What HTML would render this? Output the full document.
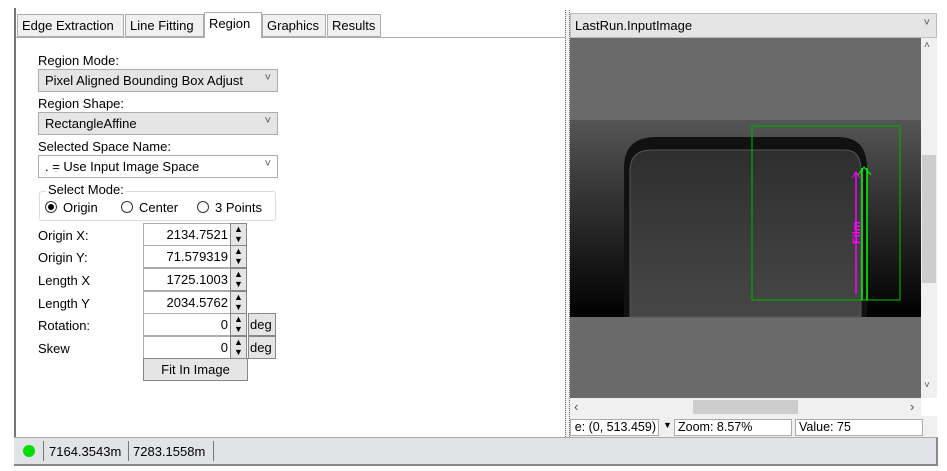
<!DOCTYPE html>
<html><head><style>
*{box-sizing:border-box;margin:0;padding:0}
body{width:947px;height:471px;background:#fff;font-family:"Liberation Sans",sans-serif;font-size:13px;color:#000;position:relative;overflow:hidden}
.a{position:absolute}
.tab{position:absolute;top:14px;height:23px;background:#f0f0f0;border:1px solid #acacac;padding:3px 4px;font-size:13px;white-space:nowrap}
.lbl{position:absolute;left:38px;font-size:13px}
.cb{position:absolute;left:38px;width:240px;height:23px;background:#e5e5e5;border:1px solid #acacac;padding:3px 6px}
.cb:after{content:"˅";position:absolute;right:6px;top:2px;font-size:11px;color:#555}
.num{position:absolute;left:143px;width:88px;height:23px;border:1px solid #acacac;background:#fff;text-align:right;padding:3px 2px}
.sp{position:absolute;left:230px;width:17px;height:23px;border:1px solid #888;background:#e5e5e5;font-size:9px;line-height:10px;text-align:center}
.deg{position:absolute;left:248px;width:28px;height:23px;border:1px solid #888;background:#e5e5e5;padding:3px 1px}
.row{position:absolute;left:38px}
</style></head><body>
<div class="a" style="left:14px;top:8px;width:2px;height:458px;background:#777"></div>
<div class="a" style="left:16px;top:37px;width:549px;height:1px;background:#acacac"></div>
<div class="tab" style="left:17px;width:107px">Edge Extraction</div>
<div class="tab" style="left:125px;width:79px">Line Fitting</div>
<div class="tab" style="left:204px;top:12px;height:26px;width:58px;background:#fff;border-bottom:none">Region</div>
<div class="tab" style="left:262px;width:64px">Graphics</div>
<div class="tab" style="left:327px;width:54px">Results</div>

<div class="lbl" style="top:53px">Region Mode:</div>
<div class="cb" style="top:69px">Pixel Aligned Bounding Box Adjust</div>
<div class="lbl" style="top:96px">Region Shape:</div>
<div class="cb" style="top:112px">RectangleAffine</div>
<div class="lbl" style="top:139px">Selected Space Name:</div>
<div class="cb" style="top:155px;background:#fff">. = Use Input Image Space</div>
<div class="a" style="left:39px;top:191px;width:237px;height:30px;border:1px solid #dcdcdc;border-radius:3px"></div>
<div class="a" style="left:46px;top:182px;background:#fff;padding:0 2px">Select Mode:</div>
<div class="a" style="left:45px;top:201px;width:12px;height:12px;border:1px solid #333;border-radius:50%"><div style="margin:2px;width:6px;height:6px;background:#000;border-radius:50%"></div></div>
<div class="a" style="left:63px;top:200px">Origin</div>
<div class="a" style="left:121px;top:201px;width:12px;height:12px;border:1px solid #333;border-radius:50%"></div>
<div class="a" style="left:139px;top:200px">Center</div>
<div class="a" style="left:197px;top:201px;width:12px;height:12px;border:1px solid #333;border-radius:50%"></div>
<div class="a" style="left:215px;top:200px">3 Points</div>

<div class="row" style="top:228px">Origin X:</div><div class="num" style="top:223px">2134.7521</div><div class="sp" style="top:223px">▲<br>▼</div>
<div class="row" style="top:250px">Origin Y:</div><div class="num" style="top:245px">71.579319</div><div class="sp" style="top:245px">▲<br>▼</div>
<div class="row" style="top:273px">Length X</div><div class="num" style="top:268px">1725.1003</div><div class="sp" style="top:268px">▲<br>▼</div>
<div class="row" style="top:296px">Length Y</div><div class="num" style="top:291px">2034.5762</div><div class="sp" style="top:291px">▲<br>▼</div>
<div class="row" style="top:318px">Rotation:</div><div class="num" style="top:313px">0</div><div class="sp" style="top:313px">▲<br>▼</div><div class="deg" style="top:313px">deg</div>
<div class="row" style="top:341px">Skew</div><div class="num" style="top:336px">0</div><div class="sp" style="top:336px">▲<br>▼</div><div class="deg" style="top:336px">deg</div>
<div class="a" style="left:143px;top:358px;width:105px;height:23px;border:1px solid #888;background:#e5e5e5;text-align:center;padding-top:3px">Fit In Image</div>

<div class="a" style="left:565px;top:10px;width:5px;height:427px;border-left:1px dotted #666;border-right:1px dotted #666;background:#f0f0f0"></div>
<div class="a" style="left:570px;top:13px;width:367px;height:25px;background:#e5e5e5;border:1px solid #bbb;padding:4px 4px">LastRun.InputImage<span style="position:absolute;right:6px;top:3px;color:#555;font-size:11px">˅</span></div>
<svg class="a" style="left:570px;top:38px" width="351" height="360">
<defs><linearGradient id="g" x1="0" y1="0" x2="0" y2="1"><stop offset="0" stop-color="#555"/><stop offset="0.4" stop-color="#333"/><stop offset="1" stop-color="#000"/></linearGradient>
<linearGradient id="p" x1="0" y1="0" x2="0" y2="1"><stop offset="0" stop-color="#2e2e2e"/><stop offset="1" stop-color="#474747"/></linearGradient></defs>
<rect width="351" height="360" fill="#6a6a6a"/>
<rect y="82" width="351" height="197" fill="url(#g)"/>
<path d="M54 279 V130 Q54 99 86 99 H268 Q297 99 297 130 V279 Z" fill="#111"/>
<path d="M60 279 V133 Q60 112 82 112 H275 Q291 112 291 133 V279 Z" fill="url(#p)" stroke="#555"/>
<rect x="182" y="88" width="148" height="174" fill="none" stroke="#0a0" stroke-width="1.2"/>
<line x1="286" y1="134" x2="286" y2="256" stroke="#f0f" stroke-width="1.5"/>
<path d="M282 140 L286 134 L290 140" stroke="#f0f" fill="none"/>
<text x="0" y="0" transform="translate(290,206) rotate(-90)" fill="#f0f" font-size="11" font-weight="bold">Film</text>
<line x1="292" y1="130" x2="292" y2="262" stroke="#0f0" stroke-width="1.5"/>
<line x1="297" y1="130" x2="297" y2="262" stroke="#0f0" stroke-width="1.5"/>
<path d="M288 137 L294 129 L301 137" stroke="#0f0" fill="none"/>
</svg>
<div class="a" style="left:921px;top:38px;width:16px;height:360px;background:#f0f0f0"><div style="position:absolute;top:117px;left:1px;width:14px;height:128px;background:#cdcdcd"></div><div style="position:absolute;top:2px;left:3px;font-size:10px;color:#555">˄</div><div style="position:absolute;top:342px;left:3px;font-size:10px;color:#555">˅</div></div>
<div class="a" style="left:570px;top:398px;width:351px;height:18px;background:#f0f0f0"><div style="position:absolute;left:123px;top:2px;width:105px;height:14px;background:#cdcdcd"></div><div style="position:absolute;left:4px;top:1px;color:#555">‹</div><div style="position:absolute;left:340px;top:1px;color:#555">›</div></div>
<div class="a" style="left:570px;top:416px;width:367px;height:21px;background:#f0f0f0"></div>
<div class="a" style="left:570px;top:419px;width:89px;height:17px;border:1px solid #aaa;background:#fff;overflow:hidden;font-size:12.5px;line-height:15px;white-space:nowrap"><span style="position:absolute;right:2px;top:0">e: (0, 513.459)</span></div>
<div class="a" style="left:663px;top:420px;font-size:9px">▼</div>
<div class="a" style="left:674px;top:419px;width:118px;height:17px;border:1px solid #aaa;background:#fff;font-size:12.5px;line-height:15px;padding-left:3px">Zoom: 8.57%</div>
<div class="a" style="left:795px;top:419px;width:128px;height:17px;border:1px solid #aaa;background:#fff;font-size:12.5px;line-height:15px;padding-left:3px">Value: 75</div>

<div class="a" style="left:14px;top:437px;width:924px;height:29px;background:#e1e3e7;border-top:1px solid #aaa;border-bottom:2px solid #888;border-right:2px solid #888"></div>
<div class="a" style="left:23px;top:445px;width:12px;height:12px;border-radius:50%;background:#0d0"></div>
<div class="a" style="left:43px;top:441px;width:1px;height:20px;background:#777"></div>
<div class="a" style="left:49px;top:444px">7164.3543m</div>
<div class="a" style="left:128px;top:441px;width:1px;height:20px;background:#777"></div>
<div class="a" style="left:133px;top:444px">7283.1558m</div>
<div class="a" style="left:213px;top:441px;width:1px;height:20px;background:#777"></div>
</body></html>
